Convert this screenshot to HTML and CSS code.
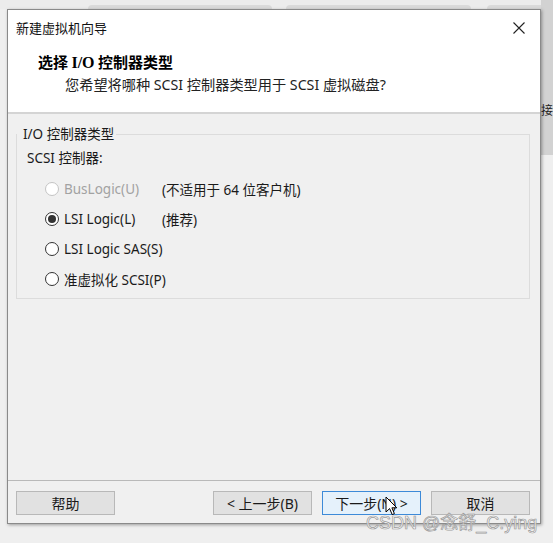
FILE: index.html
```html
<!DOCTYPE html>
<html lang="zh-CN">
<head>
<meta charset="utf-8">
<title>新建虚拟机向导</title>
<link rel="stylesheet" href="styles.css">
</head>
<body>
<div class="desktop">
  <div class="bg-tabs">
    <span class="bg-tab t1"></span>
    <span class="bg-tab t2"></span>
    <span class="bg-tab t3"></span>
  </div>
  <div class="bg-side"><span class="bg-char">接</span></div>

  <div class="dialog">
    <div class="titlebar">
      <span class="title">新建虚拟机向导</span>
      <svg class="close" width="12" height="12" viewBox="0 0 12 12"><path d="M0.5 0.5L11.5 11.5M11.5 0.5L0.5 11.5" stroke="#222" stroke-width="1.1" fill="none"/></svg>
    </div>
    <div class="header">
      <div class="h-title"><span class="cjk">选择 </span><span class="serif">I/O</span><span class="cjk"> 控制器类型</span></div>
      <div class="h-sub">您希望将哪种 SCSI 控制器类型用于 SCSI 虚拟磁盘?</div>
    </div>
    <div class="body">
      <fieldset class="group">
        <legend>I/O 控制器类型</legend>
        <div class="sub-label">SCSI 控制器:</div>
        <div class="options">
          <div class="opt disabled"><span class="radio"></span><span class="lbl">BusLogic(U)</span><span class="note">(不适用于 64 位客户机)</span></div>
          <div class="opt"><span class="radio checked"></span><span class="lbl">LSI Logic(L)</span><span class="note">(推荐)</span></div>
          <div class="opt"><span class="radio"></span><span class="lbl">LSI Logic SAS(S)</span></div>
          <div class="opt"><span class="radio"></span><span class="lbl">准虚拟化 SCSI(P)</span></div>
        </div>
      </fieldset>
    </div>
    <div class="footer">
      <button class="btn">帮助</button>
      <div class="spacer"></div>
      <button class="btn">&lt; 上一步(B)</button>
      <button class="btn primary">下一步(N) &gt;</button>
      <button class="btn">取消</button>
    </div>
  </div>

  <svg class="cursor" width="13" height="20" viewBox="0 0 13 20"><path d="M1 1L1 16L4.6 12.6L7.2 18.6L9.4 17.6L6.9 11.8L11.8 11.8Z" fill="#fff" stroke="#000" stroke-width="1" stroke-linejoin="round"/></svg>
  <div class="watermark">CSDN @念舒_C.ying</div>
</div>
</body>
</html>
```

FILE: styles.css
```css
html, body {
  margin: 0;
  padding: 0;
}
body {
  width: 553px;
  height: 543px;
  overflow: hidden;
  background: #efefef;
  font-family: "Noto Sans", "Noto Sans CJK SC", sans-serif;
  font-size: 13px;
  color: #1a1a1a;
}
.desktop {
  position: relative;
  width: 553px;
  height: 543px;
  padding: 9px 0 0 7px;
  box-sizing: border-box;
}

/* background windows behind the dialog */
.bg-tabs {
  position: absolute;
  left: 0;
  top: 0;
  width: 553px;
  height: 9px;
  background: #ececec;
}
.bg-tab {
  position: absolute;
  top: 5px;
  height: 8px;
  background: #dadada;
  border-radius: 4px;
}
.bg-tab.t1 { left: 88px; width: 184px; }
.bg-tab.t2 { left: 286px; width: 185px; }
.bg-tab.t3 { left: 487px; width: 60px; }
.bg-side {
  position: absolute;
  left: 541px;
  top: 0;
  width: 12px;
  height: 155px;
  background: #d2d2d2;
}
.bg-char {
  display: block;
  padding-top: 101px;
  width: 12px;
  overflow: hidden;
  font-family: "Noto Sans CJK SC", sans-serif;
  font-size: 12px;
  line-height: 18px;
  color: #222;
}

/* dialog */
.dialog {
  position: relative;
  width: 534px;
  height: 515px;
  box-sizing: border-box;
  border: 1px solid #8a8a8a;
  background: #f0f0f0;
  box-shadow: 1px 1px 3px rgba(0,0,0,0.35);
  display: flex;
  flex-direction: column;
}
.titlebar {
  height: 35px;
  background: #fff;
  display: flex;
  align-items: center;
  justify-content: space-between;
  padding: 0 15px 0 8px;
}
.title {
  font-family: "Noto Sans CJK SC", sans-serif;
  font-size: 13px;
  color: #111;
}
.close {
  display: block;
}
.header {
  height: 69px;
  background: #fff;
  border-bottom: 2px solid #d4d4d4;
  padding: 6px 0 0 30px;
  box-sizing: border-box;
}
.h-title {
  font-weight: bold;
  font-size: 15px;
  line-height: 22px;
  color: #000;
}
.h-title .cjk {
  font-family: "Noto Sans CJK SC", sans-serif;
}
.h-title .serif {
  font-family: "Liberation Serif", serif;
  font-size: 16px;
}
.h-sub {
  margin-top: 1px;
  padding-left: 27px;
  font-family: "Noto Sans", "Noto Sans CJK SC", sans-serif;
  font-size: 14.2px;
  line-height: 20px;
  color: #222;
}

.body {
  flex: 1;
  padding: 11px 10px 0 8px;
}
.group {
  margin: 0;
  border: 1px solid #dcdcdc;
  padding: 5px 10px 9px 10px;
  height: 174px;
  box-sizing: border-box;
}
.group legend {
  padding: 0 2px 0 6px;
  margin-left: -10px;
  font-size: 13.5px;
  line-height: 18px;
  color: #1a1a1a;
}
.sub-label {
  font-size: 13.5px;
  line-height: 18px;
  padding-top: 1px;
}
.options {
  margin-top: 13px;
  padding-left: 18px;
  display: flex;
  flex-direction: column;
  gap: 12px;
}
.opt {
  display: flex;
  align-items: center;
  height: 18px;
  font-size: 13.5px;
}
.radio {
  width: 14px;
  height: 14px;
  box-sizing: border-box;
  border: 1px solid #333;
  border-radius: 50%;
  background: #fff;
  margin-right: 5px;
  display: flex;
  align-items: center;
  justify-content: center;
}
.radio.checked::after {
  content: "";
  width: 8px;
  height: 8px;
  border-radius: 50%;
  background: #333;
}
.lbl {
  width: 98px;
  white-space: nowrap;
}
.note {
  white-space: nowrap;
}
.opt.disabled .radio {
  border-color: #c4c4c4;
}
.opt.disabled .lbl {
  color: #a2a2a2;
}

.footer {
  border-top: 1px solid #b9b9b9;
  height: 43px;
  box-sizing: border-box;
  padding: 10px 10px 0 8px;
  display: flex;
  align-items: flex-start;
  gap: 10px;
}
.spacer { flex: 1; }
.btn {
  width: 99px;
  height: 24px;
  margin: 0;
  padding: 0;
  border: 1px solid #b8b8b8;
  background: #e1e1e1;
  font-family: "Noto Sans", "Noto Sans CJK SC", sans-serif;
  font-size: 14px;
  color: #1a1a1a;
}
.btn.primary {
  border-color: #3d8ad8;
  background: #e5f1fb;
}

/* overlays */
.cursor {
  position: absolute;
  left: 385px;
  top: 496px;
}
.watermark {
  position: absolute;
  left: 366px;
  top: 512px;
  font-family: "Liberation Sans", "Noto Sans CJK SC", sans-serif;
  font-size: 18px;
  line-height: 22px;
  color: rgba(255,255,255,0.85);
  -webkit-text-stroke: 0.7px #999;
  white-space: nowrap;
}
```
